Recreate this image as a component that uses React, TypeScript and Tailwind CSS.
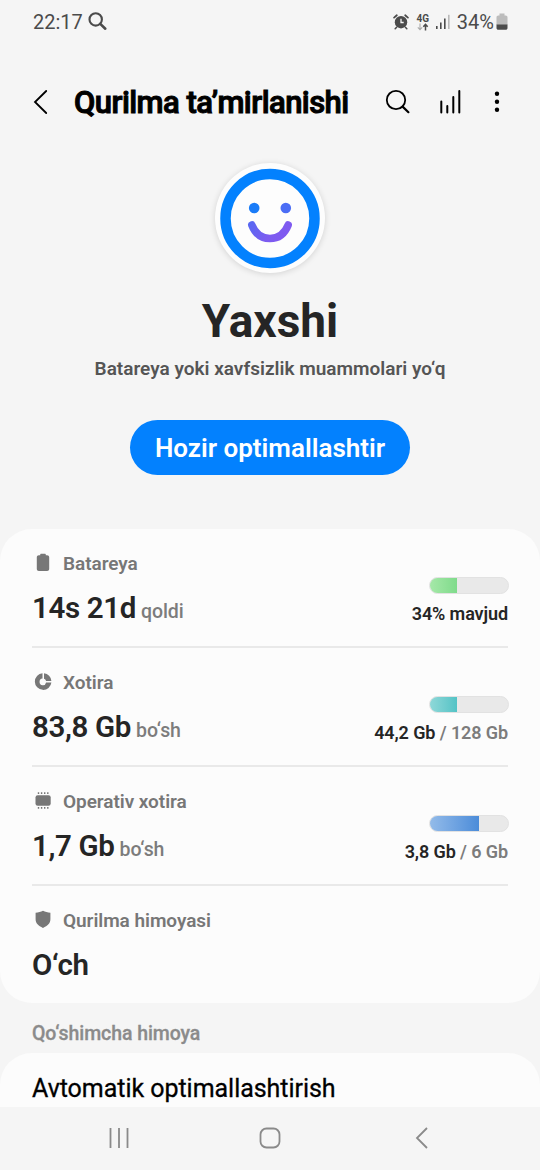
import type { ReactNode } from "react";

type Usage = {
  percent: number;
  fill: string;
  used: string;
  total?: string;
};

type CareItem = {
  id: string;
  label: string;
  value: string;
  suffix?: string;
  icon: ReactNode;
  usage?: Usage;
};

const ITEMS: CareItem[] = [
  {
    id: "battery",
    label: "Batareya",
    value: "14s 21d",
    suffix: "qoldi",
    icon: (
      <path d="M8.200 2.200V1.800c0-.6.4-1 1-1h3.600c.6 0 1 .4 1 1v.4h1.400c1.100 0 2 .9 2 2V16c0 1.100-.9 2-2 2H6.800c-1.100 0-2-.9-2-2V4.200c0-1.100.9-2 2-2z" />
    ),
    usage: { percent: 34, fill: "from-[#a5e8a8] to-[#7fdb8b]", used: "34% mavjud" }
  },
  {
    id: "storage",
    label: "Xotira",
    value: "83,8 Gb",
    suffix: "bo‘sh",
    icon: (
      <path d="M10.500 1.300V6.600A3.300 3.300 0 1 0 14.100 10.500H19.400A8.300 8.300 0 1 1 10.500 1.300ZM12 1.300A8.300 8.300 0 0 1 19.400 9H14.100A3.300 3.300 0 0 0 12 6.700Z" />
    ),
    usage: { percent: 35, fill: "from-[#8ed8d8] to-[#52c3c6]", used: "44,2 Gb", total: "128 Gb" }
  },
  {
    id: "memory",
    label: "Operativ xotira",
    value: "1,7 Gb",
    suffix: "bo‘sh",
    icon: (
      <>
        <rect x="3.500" y="4.200" width="15.200" height="10.600" rx="2.200" />
        <path d="M5.800 1.200h1.400v1.700H5.800zM8.900 1.200h1.400v1.700H8.900zM12 1.200h1.400v1.700H12zM15.100 1.200h1.400v1.700h-1.400zM5.800 16.100h1.400v1.700H5.800zM8.900 16.100h1.400v1.700H8.900zM12 16.100h1.400v1.700H12zM15.100 16.100h1.400v1.700h-1.400z" />
      </>
    ),
    usage: { percent: 63, fill: "from-[#93bbe9] to-[#4b8cd9]", used: "3,8 Gb", total: "6 Gb" }
  },
  {
    id: "protection",
    label: "Qurilma himoyasi",
    value: "O‘ch",
    icon: (
      <path d="M11 .8c2.200 1.200 4.600 1.700 7.400 2v6.500c0 4-2.700 6.700-7.400 8.600-4.700-1.900-7.400-4.600-7.400-8.600V2.800c2.800-.3 5.200-.8 7.400-2z" />
    )
  }
];

function StatusBar() {
  return (
    <div className="flex h-[44px] items-center justify-between pl-[33px] pr-[32px] text-[#4b4b4b]">
      <div className="flex items-center gap-[5px]">
        <span className="text-[20px] leading-6">22:17</span>
        <svg width="20" height="20" viewBox="0 0 20 20" fill="none" stroke="currentColor">
          <circle cx="7.700" cy="7.400" r="6.200" strokeWidth="2.100" />
          <path d="M12.300 11.900l5 4.800" strokeWidth="2.600" strokeLinecap="round" />
        </svg>
      </div>
      <div className="flex items-center">
        <svg width="16" height="16" viewBox="0 0 16 16" fill="none" stroke="currentColor">
          <circle cx="8" cy="8.200" r="6.200" fill="currentColor" stroke="none" />
          <path d="M8 4.800v3.700h2.700" stroke="#f5f5f5" strokeWidth="1.300" />
          <path d="M1.100 3.600l2.700-2.300M14.900 3.600l-2.700-2.300" strokeWidth="1.800" strokeLinecap="round" />
          <path d="M3.600 13.300l-1.400 1.400M12.400 13.300l1.400 1.400" strokeWidth="1.600" strokeLinecap="round" />
        </svg>
        <div className="ml-[7px] flex w-[14px] flex-col items-center">
          <span className="text-[10px] font-bold leading-[9px]">4G</span>
          <svg width="12" height="8" viewBox="0 0 12 8" fill="none" stroke="currentColor">
            <path d="M3 .5v6M.8 4.300l2.200 2.300 2.200-2.300" stroke="#aaaaaa" strokeWidth="1.100" />
            <path d="M8.500 7.500V1.500M6.300 3.700l2.200-2.300 2.200 2.300" strokeWidth="1.500" />
          </svg>
        </div>
        <svg className="ml-[6px]" width="15" height="16" viewBox="0 0 15 16" fill="currentColor">
          <rect x="0" y="12" width="1.600" height="3" />
          <rect x="4" y="8.500" width="1.600" height="6.500" />
          <rect x="8" y="4.500" width="1.600" height="10.500" />
          <rect x="12" y="0.800" width="1.600" height="14.200" fill="#b9b9b9" />
        </svg>
        <span className="ml-[6px] text-[20px] leading-6">34%</span>
        <svg className="ml-[2px]" width="12" height="18" viewBox="0 0 12 18">
          <path d="M3.500.5h5v2h1.200c1 0 1.800.8 1.800 1.800V12H.5V4.300C.5 3.300 1.300 2.500 2.300 2.500h1.200z" fill="#bcbcbc" />
          <path d="M.5 11.500h11V15c0 1-.8 1.800-1.800 1.800H2.300c-1 0-1.800-.8-1.800-1.800z" fill="currentColor" />
        </svg>
      </div>
    </div>
  );
}

function Header() {
  return (
    <header className="flex h-[116px] items-center pl-[32px] text-black">
      <svg width="20" height="26" viewBox="0 0 20 26" fill="none" stroke="currentColor" strokeWidth="1.800">
        <path d="M14.200 2L3 13l11.200 11" strokeLinecap="round" />
      </svg>
      <h1 className="ml-[22px] w-[276px] whitespace-nowrap pt-px text-[31px] font-medium leading-9 tracking-[-0.550px] [-webkit-text-stroke:1px_currentColor]">
        Qurilma ta’mirlanishi
      </h1>
      <svg className="ml-[34px]" width="28" height="28" viewBox="0 0 28 28" fill="none" stroke="currentColor">
        <circle cx="12" cy="12" r="9.200" strokeWidth="1.800" />
        <path d="M18.600 18.600l5.800 5.600" strokeWidth="2.200" strokeLinecap="round" />
      </svg>
      <svg className="ml-[26px]" width="24" height="28" viewBox="0 0 24 28" fill="none" stroke="currentColor" strokeWidth="2" strokeLinecap="round">
        <path d="M3.300 13.500v11M9.300 18v6.500M15.300 9v15.500M21.300 3v21.500" />
      </svg>
      <svg className="ml-[30px]" width="10" height="28" viewBox="0 0 10 28" fill="currentColor">
        <circle cx="5" cy="5.700" r="2.200" />
        <circle cx="5" cy="13.700" r="2.200" />
        <circle cx="5" cy="21.700" r="2.200" />
      </svg>
    </header>
  );
}

function StatusFace() {
  return (
    <div className="size-[110px] rounded-full bg-[#fdfdfd] shadow-[0_1px_6px_rgba(0,0,0,0.14)]">
      <svg width="110" height="110" viewBox="0 0 110 110" fill="none">
        <defs>
          <linearGradient id="smile" x1="33" y1="60" x2="66" y2="84" gradientUnits="userSpaceOnUse">
            <stop stopColor="#5568f2" />
            <stop offset="0.600" stopColor="#7c5cf0" />
            <stop offset="1" stopColor="#8058f0" />
          </linearGradient>
        </defs>
        <circle cx="55" cy="55.500" r="44.500" stroke="#0381fe" strokeWidth="10.500" />
        <circle cx="39.200" cy="45" r="5.300" fill="#1a7cf8" />
        <circle cx="70.800" cy="45" r="5.300" fill="#4b6df5" />
        <path d="M36.800 62C40 70 46 75.500 55 75.500S70 70 73.200 62" stroke="url(#smile)" strokeWidth="7.500" strokeLinecap="round" />
      </svg>
    </div>
  );
}

function UsageMeter({ usage }: { usage: Usage }) {
  return (
    <div className="flex flex-col items-end pt-[48px]">
      <div className="-mr-px h-[17px] w-[80px] overflow-hidden rounded-full border border-[#e2e2e2] bg-[#e9e9e9]">
        <div className={`h-full bg-linear-to-r ${usage.fill}`} style={{ width: `${usage.percent}%` }} />
      </div>
      <p className="mt-[9px] whitespace-nowrap text-[18px] font-semibold leading-[22px] tracking-[-0.100px] text-[#252525]">
        {usage.used}
        {usage.total ? <span className="text-[#7c7c7c]"> / {usage.total}</span> : null}
      </p>
    </div>
  );
}

function CareRow({ item }: { item: CareItem }) {
  return (
    <li className="flex h-[119px] justify-between border-b-2 border-[#e9e9e9] last:border-b-0">
      <div className="pt-[23px]">
        <div className="flex h-[24px] items-center">
          <svg width="22" height="22" viewBox="0 0 22 22" fill="#777777">
            {item.icon}
          </svg>
          <span className="ml-[9px] text-[19px] font-semibold leading-6 tracking-[-0.050px] text-[#777777]">{item.label}</span>
        </div>
        <p className="mt-[14px] whitespace-nowrap text-[29.500px] font-semibold leading-9 tracking-[-0.350px] text-[#252525]">
          {item.value}
          {item.suffix ? <span className="ml-[5px] text-[19.500px] font-medium tracking-[-0.100px] text-[#7c7c7c]">{item.suffix}</span> : null}
        </p>
      </div>
      {item.usage ? <UsageMeter usage={item.usage} /> : null}
    </li>
  );
}

function NavigationBar() {
  return (
    <nav className="grid h-[63px] grid-cols-[120px_300px_120px] items-center bg-[#f5f5f5] pb-[2px]">
      <svg className="ml-[108px]" width="24" height="24" viewBox="0 0 24 24" stroke="#8a8a8a" strokeWidth="1.800">
        <path d="M2.500 2v20M11 2v20M19.500 2v20" />
      </svg>
      <svg className="mx-auto" width="24" height="24" viewBox="0 0 24 24" fill="none" stroke="#8a8a8a" strokeWidth="1.800">
        <rect x="2.500" y="2.500" width="19" height="19" rx="6" />
      </svg>
      <svg className="-ml-[6px]" width="16" height="24" viewBox="0 0 16 24" fill="none" stroke="#8a8a8a" strokeWidth="1.800">
        <path d="M13 2L3 12l10 10" />
      </svg>
    </nav>
  );
}

export default function App() {
  return (
    <div className="flex h-[1170px] w-[540px] flex-col overflow-hidden bg-[#f5f5f5] font-[Roboto,sans-serif]">
      <StatusBar />
      <Header />

      <section className="flex h-[369px] flex-col items-center pt-[3px]">
        <StatusFace />
        <h2 className="mt-[20px] text-[46px] font-bold leading-[56px] text-[#252525]">Yaxshi</h2>
        <p className="mt-[8px] whitespace-nowrap text-[19px] font-semibold leading-6 text-[#555555]">
          Batareya yoki xavfsizlik muammolari yo‘q
        </p>
        <button type="button" className="mt-[39px] h-[55px] w-[280px] rounded-full bg-[#0381fe] pt-[2px] text-[26px] font-semibold text-white">
          Hozir optimallashtir
        </button>
      </section>

      <ul className="h-[474px] shrink-0 rounded-[32px] bg-[#fcfcfc] px-[32px]">
        {ITEMS.map((item) => (
          <CareRow key={item.id} item={item} />
        ))}
      </ul>

      <h3 className="h-[50px] px-[32px] pt-[19px] text-[19.500px] font-medium leading-6 tracking-[-0.080px] text-[#8b8b8b] [-webkit-text-stroke:0.300px_currentColor]">
        Qo‘shimcha himoya
      </h3>
      <div className="h-[54px] rounded-t-[32px] bg-[#fcfcfc] px-[32px] pt-[20px]">
        <p className="text-[25px] leading-8 tracking-[-0.040px] text-black [-webkit-text-stroke:0.300px_currentColor]">Avtomatik optimallashtirish</p>
      </div>
      <NavigationBar />
    </div>
  );
}
